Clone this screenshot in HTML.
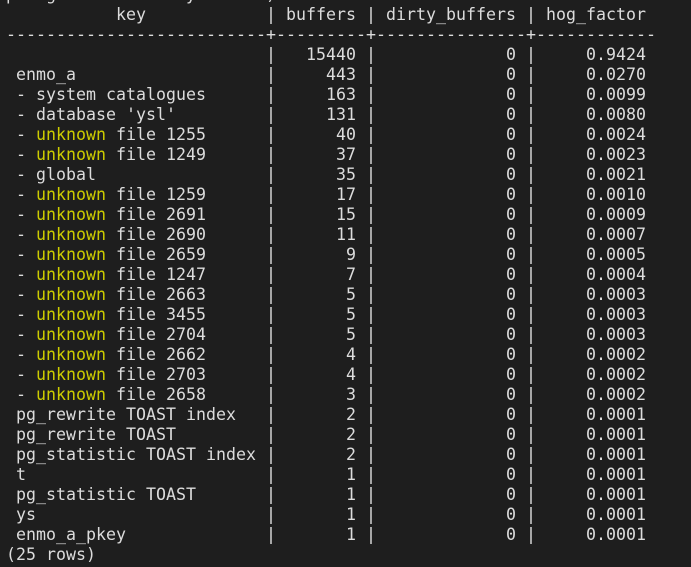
<!DOCTYPE html>
<html>
<head>
<meta charset="utf-8">
<style>
html,body{margin:0;padding:0;background:#1e1e1e;width:691px;height:567px;overflow:hidden}
pre{position:absolute;left:6px;top:-15px;margin:0;font-family:"DejaVu Sans Mono","Liberation Mono",monospace;font-size:16.62px;line-height:20px;color:#dcdcdc;white-space:pre}
b{font-weight:normal;color:#cdcd00}
</style>
</head>
<body>
<pre>p   g             y       )
           key            | buffers | dirty_buffers | hog_factor
--------------------------+---------+---------------+------------
                          |   15440 |             0 |     0.9424
 enmo_a                   |     443 |             0 |     0.0270
 - system catalogues      |     163 |             0 |     0.0099
 - database 'ysl'         |     131 |             0 |     0.0080
 - <b>unknown</b> file 1255      |      40 |             0 |     0.0024
 - <b>unknown</b> file 1249      |      37 |             0 |     0.0023
 - global                 |      35 |             0 |     0.0021
 - <b>unknown</b> file 1259      |      17 |             0 |     0.0010
 - <b>unknown</b> file 2691      |      15 |             0 |     0.0009
 - <b>unknown</b> file 2690      |      11 |             0 |     0.0007
 - <b>unknown</b> file 2659      |       9 |             0 |     0.0005
 - <b>unknown</b> file 1247      |       7 |             0 |     0.0004
 - <b>unknown</b> file 2663      |       5 |             0 |     0.0003
 - <b>unknown</b> file 3455      |       5 |             0 |     0.0003
 - <b>unknown</b> file 2704      |       5 |             0 |     0.0003
 - <b>unknown</b> file 2662      |       4 |             0 |     0.0002
 - <b>unknown</b> file 2703      |       4 |             0 |     0.0002
 - <b>unknown</b> file 2658      |       3 |             0 |     0.0002
 pg_rewrite TOAST index   |       2 |             0 |     0.0001
 pg_rewrite TOAST         |       2 |             0 |     0.0001
 pg_statistic TOAST index |       2 |             0 |     0.0001
 t                        |       1 |             0 |     0.0001
 pg_statistic TOAST       |       1 |             0 |     0.0001
 ys                       |       1 |             0 |     0.0001
 enmo_a_pkey              |       1 |             0 |     0.0001
(25 rows)</pre>
</body>
</html>
